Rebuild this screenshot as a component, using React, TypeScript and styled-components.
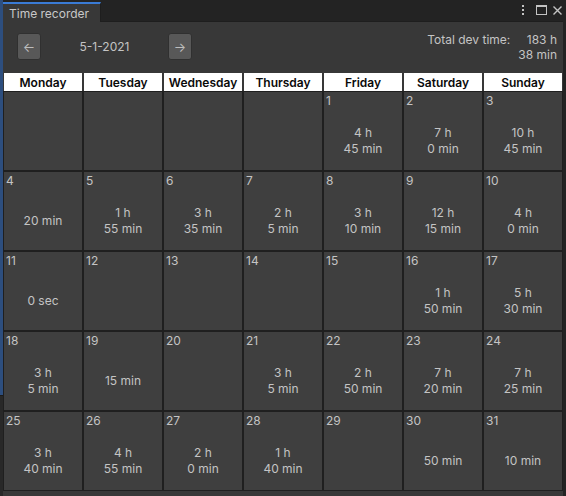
import React from "react";
import styled, { createGlobalStyle } from "styled-components";

const Global = createGlobalStyle`
  html, body { margin: 0; padding: 0; background: #232323; }
  body { width: 566px; height: 496px; overflow: hidden; font-family: Inter, "Noto Sans", sans-serif; }
  #root { width: 566px; height: 496px; }
`;

const Root = styled.div`
  display: flex;
  width: 566px;
  height: 496px;
  background: #232323;
`;

const LeftStrip = styled.div`
  width: 3px;
  display: flex;
  flex-direction: column;
`;

const StripBlue = styled.div`
  height: 395px;
  background: #2d4e7e;
`;

const StripDark = styled.div`
  flex: 1;
  background: #282828;
  border-top: 1px solid #1b1b1b;
`;

const Window = styled.div`
  flex: 1;
  display: flex;
  flex-direction: column;
  margin-right: 3px;
`;

const TabBar = styled.div`
  height: 22px;
  background: #232323;
  display: flex;
  align-items: flex-end;
  border-bottom: 1px solid #1e1e1e;
  box-sizing: border-box;
`;

const Tab = styled.div`
  width: 98px;
  height: 20px;
  box-sizing: border-box;
  background: #383838;
  border-top: 2px solid #3a7bd5;
  border-right: 1px solid #1e1e1e;
  color: #c8c8c8;
  font-size: 12px;
  padding-left: 6px;
  display: flex;
  align-items: center;
  margin-bottom: -1px;
`;

const TabSpacer = styled.div`
  flex: 1;
`;

const TabIcons = styled.div`
  display: flex;
  align-items: center;
  height: 22px;
  padding-right: 1px;
  color: #c4c4c4;
`;

const IconSlot = styled.div<{ $gap: number }>`
  display: flex;
  align-items: center;
  margin-left: ${(p) => p.$gap}px;
`;

const Panel = styled.div`
  flex: 1;
  background: #383838;
  display: flex;
  flex-direction: column;
  padding: 0 1px 6px 1px;
`;

const Toolbar = styled.div`
  height: 51px;
  display: flex;
  align-items: flex-start;
  justify-content: space-between;
`;

const Nav = styled.div`
  display: flex;
  align-items: center;
  width: 175px;
  margin: 11px 0 0 13px;
`;

const NavButton = styled.div`
  width: 24px;
  height: 27px;
  box-sizing: border-box;
  background: #585858;
  border: 1px solid #303030;
  border-radius: 3px;
  display: flex;
  align-items: center;
  justify-content: center;
  color: #bdbdbd;
  font-size: 13px;
`;

const DateLabel = styled.div`
  flex: 1;
  text-align: center;
  color: #c4c4c4;
  font-size: 12px;
`;

const Total = styled.div`
  display: flex;
  gap: 8px;
  margin: 10px 5px 0 0;
  color: #c4c4c4;
  font-size: 12px;
  line-height: 15px;
`;

const TotalValue = styled.div`
  text-align: right;
`;

const HeaderRow = styled.div`
  display: grid;
  grid-template-columns: repeat(7, 78px);
  column-gap: 2px;
  margin-bottom: 1px;
`;

const HeaderCell = styled.div`
  height: 18px;
  background: #ffffff;
  color: #0a0a0a;
  font-size: 12px;
  font-weight: 600;
  display: flex;
  align-items: center;
  justify-content: center;
`;

const Grid = styled.div`
  display: grid;
  grid-template-columns: repeat(7, 78px);
  grid-auto-rows: 78px;
  gap: 2px;
`;

const Cell = styled.div`
  box-sizing: border-box;
  background: #3f3f3f;
  outline: 1px solid #1f1f1f;
  display: flex;
  flex-direction: column;
  color: #c4c4c4;
  font-size: 12px;
`;

const DayNum = styled.div`
  height: 16px;
  line-height: 16px;
  padding-left: 2px;
  margin-top: 1px;
`;

const Duration = styled.div`
  flex: 1;
  display: flex;
  flex-direction: column;
  align-items: center;
  justify-content: center;
  line-height: 16px;
  padding-top: 3px;
`;

type Day = { n?: number; t?: string[] };

const days: Day[] = [
  {}, {}, {}, {},
  { n: 1, t: ["4 h", "45 min"] },
  { n: 2, t: ["7 h", "0 min"] },
  { n: 3, t: ["10 h", "45 min"] },
  { n: 4, t: ["20 min"] },
  { n: 5, t: ["1 h", "55 min"] },
  { n: 6, t: ["3 h", "35 min"] },
  { n: 7, t: ["2 h", "5 min"] },
  { n: 8, t: ["3 h", "10 min"] },
  { n: 9, t: ["12 h", "15 min"] },
  { n: 10, t: ["4 h", "0 min"] },
  { n: 11, t: ["0 sec"] },
  { n: 12 },
  { n: 13 },
  { n: 14 },
  { n: 15 },
  { n: 16, t: ["1 h", "50 min"] },
  { n: 17, t: ["5 h", "30 min"] },
  { n: 18, t: ["3 h", "5 min"] },
  { n: 19, t: ["15 min"] },
  { n: 20 },
  { n: 21, t: ["3 h", "5 min"] },
  { n: 22, t: ["2 h", "50 min"] },
  { n: 23, t: ["7 h", "20 min"] },
  { n: 24, t: ["7 h", "25 min"] },
  { n: 25, t: ["3 h", "40 min"] },
  { n: 26, t: ["4 h", "55 min"] },
  { n: 27, t: ["2 h", "0 min"] },
  { n: 28, t: ["1 h", "40 min"] },
  { n: 29 },
  { n: 30, t: ["50 min"] },
  { n: 31, t: ["10 min"] },
];

const weekdays = ["Monday", "Tuesday", "Wednesday", "Thursday", "Friday", "Saturday", "Sunday"];

const Kebab = () => (
  <svg width="2" height="10" viewBox="0 0 2 10">
    <rect x="0" y="0" width="2" height="2" fill="#c4c4c4" />
    <rect x="0" y="4" width="2" height="2" fill="#c4c4c4" />
    <rect x="0" y="8" width="2" height="2" fill="#c4c4c4" />
  </svg>
);

const MaxIcon = () => (
  <svg width="11" height="10" viewBox="0 0 11 10">
    <rect x="0.5" y="0.5" width="10" height="9" fill="none" stroke="#c4c4c4" />
    <rect x="0" y="0" width="11" height="2" fill="#c4c4c4" />
  </svg>
);

const CloseIcon = () => (
  <svg width="9" height="9" viewBox="0 0 9 9">
    <path d="M0.5 0.5 L8.5 8.5 M8.5 0.5 L0.5 8.5" stroke="#c4c4c4" strokeWidth="1.4" />
  </svg>
);

export default function App() {
  return (
    <Root>
      <Global />
      <LeftStrip>
        <StripBlue />
        <StripDark />
      </LeftStrip>
      <Window>
        <TabBar>
          <Tab>Time recorder</Tab>
          <TabSpacer />
          <TabIcons>
            <IconSlot $gap={0}>
              <Kebab />
            </IconSlot>
            <IconSlot $gap={12}>
              <MaxIcon />
            </IconSlot>
            <IconSlot $gap={6}>
              <CloseIcon />
            </IconSlot>
          </TabIcons>
        </TabBar>
        <Panel>
          <Toolbar>
            <Nav>
              <NavButton>←</NavButton>
              <DateLabel>5-1-2021</DateLabel>
              <NavButton>→</NavButton>
            </Nav>
            <Total>
              <div>Total dev time:</div>
              <TotalValue>
                183 h
                <br />
                38 min
              </TotalValue>
            </Total>
          </Toolbar>
          <HeaderRow>
            {weekdays.map((w) => (
              <HeaderCell key={w}>{w}</HeaderCell>
            ))}
          </HeaderRow>
          <Grid>
            {days.map((d, i) => (
              <Cell key={i}>
                <DayNum>{d.n ?? ""}</DayNum>
                <Duration>
                  {(d.t ?? []).map((l) => (
                    <div key={l}>{l}</div>
                  ))}
                </Duration>
              </Cell>
            ))}
          </Grid>
        </Panel>
      </Window>
    </Root>
  );
}
